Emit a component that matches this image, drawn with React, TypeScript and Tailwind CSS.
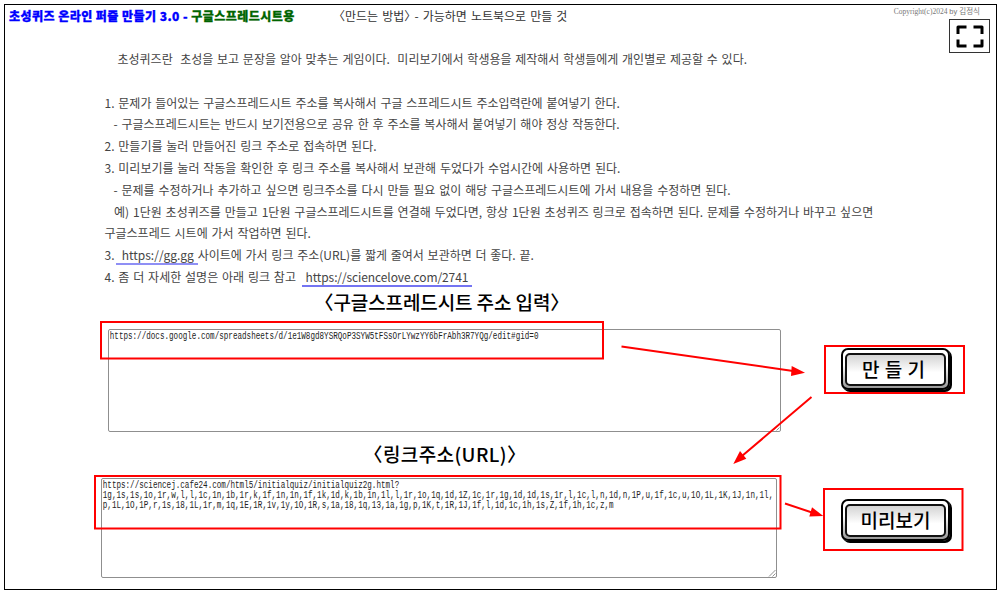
import type { ReactNode } from "react";

const LINK_CODES = [
  "https://sciencej.cafe24.com/html5/initialquiz/initialquiz2g.html?",
  "1g,1s,1s,1o,1r,w,l,l,1c,1n,1b,1r,k,1f,1n,1n,1f,1k,1d,k,1b,1n,1l,l,1r,1o,1q,1d,1Z,1c,1r,1g,1d,1d,1s,1r,l,1c,l,n,1d,n,1P,u,1f,1c,u,1O,1L,1K,1J,1n,1l,",
  "p,1L,1O,1P,r,1s,18,1L,1r,m,1q,1E,1R,1v,1y,1O,1R,s,1a,18,1q,13,1a,1g,p,1K,t,1R,1J,1f,l,1d,1c,1h,1s,Z,1f,1h,1c,z,m",
];

const SHEET_URL = [
  "https://docs.google.com/spreadsheets/d/1e1W8gd8YSRQoP3SYW5tFSsOrLYwzYY6bFrAbh3R7YQg/edit#gid=0",
];

function Line({ className = "", children }: { className?: string; children: ReactNode }) {
  return <p className={`h-[21.8px] whitespace-pre ${className}`}>{children}</p>;
}

// Angle brackets set at half width so they hug the text
function Bracketed({ children }: { children: ReactNode }) {
  return (
    <>
      <span className="[font-feature-settings:'halt']">〈</span>
      {children}
      <span className="[font-feature-settings:'halt']">〉</span>
    </>
  );
}

function UrlBox({ lines, className }: { lines: string[]; className: string }) {
  return (
    <div
      className={`flex flex-col justify-between rounded-[2px] border border-[#8f8f8f] bg-white ${className}`}
    >
      <div className="origin-left scale-x-[0.76] pl-[1px] pt-[2px] font-['Liberation_Mono',monospace] text-[10px] leading-[10px] text-[#222]">
        {lines.map((line) => (
          <div key={line} className="whitespace-pre">
            {line}
          </div>
        ))}
      </div>
      <svg className="size-[8px] self-end" viewBox="0 0 8 8" fill="none" stroke="#777" strokeWidth="0.8">
        <path d="M1 7.5 7.5 1M4.5 7.5l3-3" />
      </svg>
    </div>
  );
}

function KeyButton({ children }: { children: ReactNode }) {
  return (
    <button className="flex h-[42px] w-[109px] items-start rounded-[7px] border-2 border-black bg-linear-to-b from-white from-40% to-[#999] px-[2px] pt-[3px] shadow-[1px_1px_0_#000,2px_2px_0_#000]">
      <span className="flex h-[33px] w-full items-center justify-center rounded-[5px] border-2 border-[#111] bg-linear-to-b from-[#d4d4d4] to-white to-60% pb-[2px] text-[19px] font-medium leading-none text-black">
        {children}
      </span>
    </button>
  );
}

function Annotations() {
  return (
    <svg
      className="pointer-events-none absolute left-0 top-0"
      width="1003"
      height="594"
      viewBox="0 0 1003 594"
      fill="none"
      stroke="#ff0000"
      strokeWidth="2"
    >
      <rect x="101" y="322" width="502" height="36.5" />
      <rect x="95" y="476" width="685.5" height="52.5" />
      <rect x="825" y="346" width="139" height="47" />
      <rect x="824" y="489" width="138.5" height="61" />
      <path d="M621.5 346.5 793 371M811.5 397 742 456M785 503.5l27 9" />
      <g fill="#ff0000" stroke="none">
        <path d="M791.7 366 805 372.7 791 376z" />
        <path d="M733.3 464 740 451l6.3 7.7z" />
        <path d="M812 507.3 823.3 516l-14 .5z" />
      </g>
    </svg>
  );
}

export default function App() {
  return (
    <div className="relative h-[594px] w-[1003px] overflow-hidden bg-white p-1 font-['Noto_Sans_CJK_KR',sans-serif]">
      <main className="h-[586px] w-[993px] border border-black">
        <header className="flex h-[43px] items-start">
          <h1 className="w-[334px] whitespace-pre pl-[4px] pt-[3px] text-[12px] font-black leading-[16px] tracking-[0.45px] text-[#0000ff] [-webkit-text-stroke:0.3px_currentColor]">
            초성퀴즈 온라인 퍼즐 만들기 3.0 - <span className="text-[#006400]">구글스프레드시트용</span>
          </h1>
          <p className="pt-[3px] text-[12px] leading-[16px] text-[#333] [word-spacing:1.4px]">
            <Bracketed>만드는 방법</Bracketed> - 가능하면 노트북으로 만들 것
          </p>
          <div className="ml-auto mr-[6px] flex flex-col items-end">
            <p className="mr-[10px] h-[14px] whitespace-pre pt-[2px] font-['Liberation_Serif','Noto_Sans_CJK_KR',serif] text-[7.5px] leading-[10px] text-[#777]">
              Copyright(c)2024 <span className="font-['Liberation_Sans','Noto_Sans_CJK_KR',sans-serif]">by 김정식</span>
            </p>
            <button className="flex h-[34px] w-[41px] items-center justify-center border border-[#333] bg-white">
              <svg width="28" height="23" viewBox="0 0 28 23" fill="none" stroke="#000" strokeWidth="3" strokeLinejoin="round">
                <path d="M2 9V2h8.5M17.5 2H26v7M2 14.5V21h8.5M17.5 21H26v-6.5" />
              </svg>
            </button>
          </div>
        </header>

        <section className="h-[239px] pl-[99.5px] text-[12px] font-normal leading-[21.8px] text-[#444] [word-spacing:1.15px]">
          <Line className="mb-[21.8px] pl-[13px] [word-spacing:1.05px]">
            초성퀴즈란  초성을 보고 문장을 알아 맞추는 게임이다.  미리보기에서 학생용을 제작해서 학생들에게 개인별로 제공할 수 있다.
          </Line>
          <Line>1. 문제가 들어있는 구글스프레드시트 주소를 복사해서 구글 스프레드시트 주소입력란에 붙여넣기 한다.</Line>
          <Line className="pl-[9px]">
            - 구글스프레드시트는 반드시 보기전용으로 공유 한 후 주소를 복사해서 붙여넣기 해야 정상 작동한다.
          </Line>
          <Line>2. 만들기를 눌러 만들어진 링크 주소로 접속하면 된다.</Line>
          <Line>3. 미리보기를 눌러 작동을 확인한 후 링크 주소를 복사해서 보관해 두었다가 수업시간에 사용하면 된다.</Line>
          <Line className="pl-[9px]">
            - 문제를 수정하거나 추가하고 싶으면 링크주소를 다시 만들 필요 없이 해당 구글스프레드시트에 가서 내용을 수정하면 된다.
          </Line>
          <Line className="pl-[9.5px] [word-spacing:1.2px]">
            예) 1단원 초성퀴즈를 만들고 1단원 구글스프레드시트를 연결해 두었다면, 항상 1단원 초성퀴즈 링크로 접속하면 된다. 문제를 수정하거나 바꾸고 싶으면
          </Line>
          <Line>구글스프레드 시트에 가서 작업하면 된다.</Line>
          <Line className="[word-spacing:1.05px]">
            3.<a className="ml-[1.5px] border-b-2 border-[#8f8ff5] pl-[2px]"> https://gg.gg </a>사이트에 가서 링크 주소(URL)를 짧게 줄여서 보관하면 더 좋다. 끝.
          </Line>
          <Line>
            4. 좀 더 자세한 설명은 아래 링크 참고 <a className="ml-[2px] border-b-2 border-[#7474f2] tracking-[-0.1px]"> https://sciencelove.com/2741 </a>
          </Line>
        </section>

        <div className="flex">
          <section className="flex w-[776px] flex-col">
            <h2 className="ml-[319px] h-[42px] whitespace-pre text-[19px] font-medium leading-[30px] tracking-[-0.1px] text-black">
              <Bracketed>구글스프레드시트 주소 입력</Bracketed>
            </h2>
            <UrlBox lines={SHEET_URL} className="ml-[103px] h-[103px] w-[673px]" />
            <h2 className="ml-[368px] h-[46px] whitespace-pre pt-[7px] text-[19px] font-medium leading-[30px] tracking-[0.4px] text-black">
              <Bracketed>링크주소(URL)</Bracketed>
            </h2>
            <UrlBox lines={LINK_CODES} className="ml-[96px] h-[100px] w-[676px]" />
          </section>
          <aside className="flex flex-col gap-[109px] pl-[60px] pt-[61px]">
            <KeyButton>
              <span className="mr-[4px] [word-spacing:1px]">만 들 기</span>
            </KeyButton>
            <KeyButton>미리보기</KeyButton>
          </aside>
        </div>
      </main>
      <Annotations />
    </div>
  );
}
